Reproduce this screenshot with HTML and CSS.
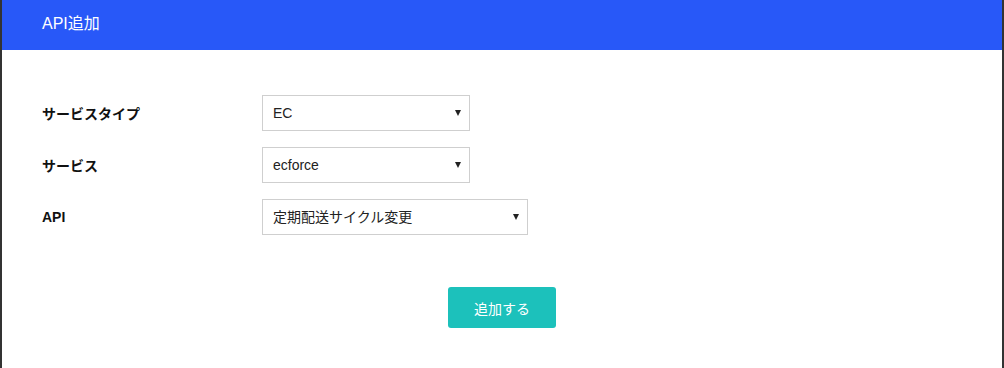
FILE: index.html
```html
<!DOCTYPE html>
<html lang="ja">
<head>
    <meta charset="UTF-8">
    <meta name="viewport" content="width=device-width, initial-scale=1.0">
    <title>API追加</title>
    <link rel="stylesheet" href="styles.css">
</head>
<body>
    <div class="panel">
        <div class="panel-header">API追加</div>
        <form class="panel-body" onsubmit="return false">
            <div class="row">
                <label class="label" for="type">サービスタイプ</label>
                <div class="select-wrap">
                    <select id="type">
                        <option>EC</option>
                    </select>
                </div>
            </div>
            <div class="row">
                <label class="label" for="service">サービス</label>
                <div class="select-wrap">
                    <select id="service">
                        <option>ecforce</option>
                    </select>
                </div>
            </div>
            <div class="row">
                <label class="label" for="api">API</label>
                <div class="select-wrap wide">
                    <select id="api">
                        <option>定期配送サイクル変更</option>
                    </select>
                </div>
            </div>
            <div class="actions">
                <button class="btn-add" type="submit">追加する</button>
            </div>
        </form>
    </div>
</body>
</html>
```

FILE: styles.css
```css
body {
    margin: 0;
    background-color: #333;
    font-family: "Liberation Sans", Arial, "Noto Sans CJK JP", sans-serif;
    color: #222;
}

.panel {
    margin: 0 2px;
    height: 368px;
    background-color: white;
}

.panel-header {
    height: 50px;
    line-height: 48px;
    padding-left: 40px;
    background-color: #2858f8;
    color: white;
    font-size: 16px;
}

.panel-body {
    padding: 45px 40px 0;
}

.row {
    display: flex;
    align-items: center;
    margin-bottom: 16px;
}

.label {
    width: 220px;
    font-size: 14px;
    font-weight: bold;
    color: #111;
}

.select-wrap {
    position: relative;
    width: 208px;
}

.select-wrap.wide {
    width: 266px;
}

.select-wrap select {
    appearance: none;
    -webkit-appearance: none;
    width: 100%;
    height: 36px;
    padding: 0 24px 0 10px;
    border: 1px solid #cfcfcf;
    border-radius: 0;
    background-color: white;
    font-family: inherit;
    font-size: 14px;
    color: #222;
}

.select-wrap::after {
    content: "";
    position: absolute;
    right: 9px;
    top: 15px;
    border-left: 3px solid transparent;
    border-right: 3px solid transparent;
    border-top: 6px solid #222;
    pointer-events: none;
}

.actions {
    display: flex;
    justify-content: center;
    padding-top: 36px;
}

.btn-add {
    width: 108px;
    height: 41px;
    border: none;
    border-radius: 3px;
    background-color: #1cc1bb;
    color: white;
    font-family: inherit;
    font-size: 14px;
    cursor: pointer;
}

.btn-add:hover {
    opacity: 0.8;
}
```
